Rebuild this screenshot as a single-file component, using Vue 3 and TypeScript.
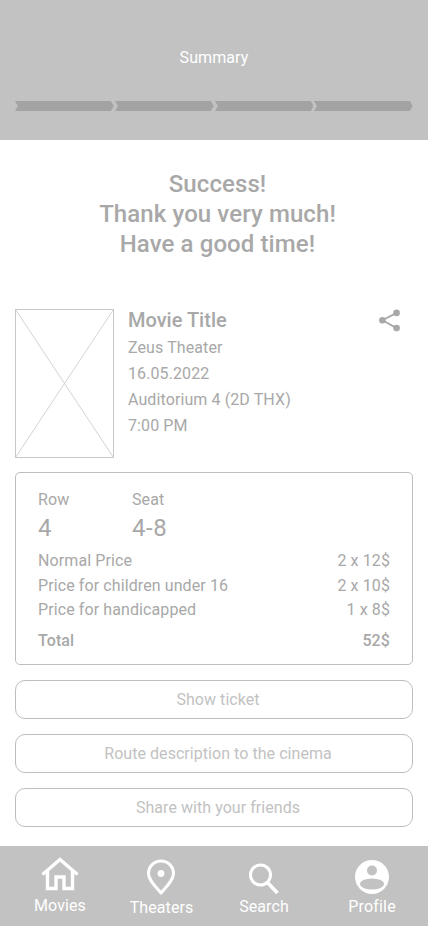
<script setup lang="ts">
const lines = ['Zeus Theater', '16.05.2022', 'Auditorium 4 (2D THX)', '7:00 PM']
const prices = [
  ['Normal Price', '2 x 12$'],
  ['Price for children under 16', '2 x 10$'],
  ['Price for handicapped', '1 x 8$'],
]
const actions = ['Show ticket', 'Route description to the cinema', 'Share with your friends']
</script>

<template>
  <div class="page">
    <header class="top">
      <div class="top-title">Summary</div>
      <div class="steps">
        <svg v-for="n in 4" :key="n" class="step" viewBox="0 0 100 10" preserveAspectRatio="none">
          <path d="M0 0H97L100 5L97 10H0L3 5Z" fill="#a3a3a3" />
        </svg>
      </div>
    </header>

    <section class="thanks">
      <div>Success!</div>
      <div>Thank you very much!</div>
      <div>Have a good time!</div>
    </section>

    <section class="movie">
      <svg class="poster" viewBox="0 0 99 149">
        <rect x="0.5" y="0.5" width="98" height="148" fill="none" stroke="#c8c8c8" />
        <path d="M0.5 0.5L98.5 148.5M98.5 0.5L0.5 148.5" stroke="#c8c8c8" stroke-width="0.8" fill="none" />
      </svg>
      <div class="info">
        <div class="title">Movie Title</div>
        <div v-for="l in lines" :key="l" class="info-line">{{ l }}</div>
      </div>
      <svg class="share" viewBox="1.5 1 21.5 22.5" fill="#a8a8a8">
        <circle cx="19.5" cy="4.5" r="3.4" />
        <circle cx="19.5" cy="20" r="3.4" />
        <circle cx="5" cy="12" r="3.4" />
        <path d="M5 12L19.5 4.5M5 12L19.5 20" stroke="#a8a8a8" stroke-width="2" />
      </svg>
    </section>

    <section class="card">
      <div class="seats">
        <div class="seat-col">
          <div class="seat-label">Row</div>
          <div class="seat-value">4</div>
        </div>
        <div class="seat-col">
          <div class="seat-label">Seat</div>
          <div class="seat-value">4-8</div>
        </div>
      </div>
      <div class="prices">
        <div v-for="p in prices" :key="p[0]" class="price-row">
          <span>{{ p[0] }}</span><span>{{ p[1] }}</span>
        </div>
      </div>
      <div class="total"><span class="total-label">Total</span><span>52$</span></div>
    </section>

    <section class="actions">
      <button v-for="a in actions" :key="a" class="action">{{ a }}</button>
    </section>

    <nav class="tabs">
      <div class="tab tab-movies">
        <svg class="icon" viewBox="0 0 38 34" fill="none" stroke="#fff" stroke-width="3.4">
          <path d="M1.5 17.5L19 2.5L36.5 17.5" stroke-linejoin="miter" />
          <path d="M6.5 14V31.5H15V20H23V31.5H31.5V14" />
        </svg>
        <span>Movies</span>
      </div>
      <div class="tab tab-theaters">
        <svg class="icon" viewBox="0 0 30 36">
          <path d="M15 34C9 27 2.5 21 2.5 14.5A12.5 12.5 0 0 1 27.5 14.5C27.5 21 21 27 15 34Z" fill="none" stroke="#fff" stroke-width="3" stroke-linejoin="round" />
          <circle cx="15" cy="14.5" r="3.4" fill="#fff" />
        </svg>
        <span>Theaters</span>
      </div>
      <div class="tab tab-search">
        <svg class="icon" viewBox="0 0 32 34" fill="none" stroke="#fff" stroke-width="3">
          <circle cx="12.5" cy="13" r="10" />
          <path d="M19.5 20.5L29.5 31" stroke-width="3.6" />
        </svg>
        <span>Search</span>
      </div>
      <div class="tab tab-profile">
        <svg class="icon" viewBox="0 0 36 36">
          <circle cx="18" cy="18" r="17" fill="#fff" />
          <circle cx="18" cy="11.5" r="5" fill="#c2c2c2" />
          <ellipse cx="18" cy="25" rx="12" ry="5.5" fill="#c2c2c2" />
        </svg>
        <span>Profile</span>
      </div>
    </nav>
  </div>
</template>

<style>
html, body { margin: 0; background: #fff; }
</style>

<style scoped>
.page {
  width: 428px;
  height: 926px;
  display: flex;
  flex-direction: column;
  font-family: Roboto, "Liberation Sans", sans-serif;
  color: #a8a8a8;
  overflow: hidden;
  letter-spacing: 0.1px;
}
.top {
  height: 140px;
  background: #c2c2c2;
  display: flex;
  flex-direction: column;
  box-sizing: border-box;
  padding: 48px 15px 0;
}
.top-title {
  color: #fff;
  font-size: 16px;
  line-height: 19px;
  text-align: center;
}
.steps {
  display: flex;
  gap: 1px;
  margin-top: 34px;
}
.step { flex: 1; height: 10px; display: block; }
.thanks {
  margin-top: 29px;
  padding-left: 7px;
  text-align: center;
  font-size: 24px;
  line-height: 30px;
  font-weight: 500;
  letter-spacing: 0.1px;
}
.movie {
  margin-top: 50px;
  padding: 0 15px;
  display: flex;
  align-items: flex-start;
}
.poster { width: 99px; height: 149px; flex: none; display: block; }
.info { margin-left: 14px; flex: 1; margin-top: -1px; }
.title { font-size: 20px; line-height: 24px; font-weight: 500; margin-bottom: 3px; letter-spacing: 0; }
.info-line { font-size: 16px; line-height: 26px; }
.share { width: 21px; height: 23px; margin: 0 13px 0 0; flex: none; }
.card {
  margin: 14px 15px 0;
  height: 193px;
  box-sizing: border-box;
  border: 1px solid #bdbdbd;
  border-radius: 5px;
  padding: 17px 22px 0;
}
.seats { display: flex; }
.seat-col { width: 94px; }
.seat-label { font-size: 16px; line-height: 19px; }
.seat-value { font-size: 24px; line-height: 28px; margin-top: 5px; letter-spacing: 0.6px; }
.prices { margin-top: 7px; }
.price-row, .total {
  display: flex;
  justify-content: space-between;
  font-size: 16px;
  line-height: 24.5px;
}
.total { margin-top: 6.5px; font-weight: 500; }
.actions {
  margin: 15px 15px 0;
  display: flex;
  flex-direction: column;
  gap: 15px;
}
.action {
  height: 39px;
  box-sizing: border-box;
  border: 1px solid #bdbdbd;
  border-radius: 10px;
  background: #fff;
  color: #c2c2c2;
  font: 400 16px Roboto, "Liberation Sans", sans-serif;
  letter-spacing: 0.05px;
  padding: 0 0 0 8px;
}
.tabs {
  margin-top: 19px;
  height: 80px;
  background: #c2c2c2;
  display: grid;
  box-sizing: border-box;
  padding-left: 10px;
  grid-template-columns: 101px 103px 108px 100px;
  color: #fff;
  font-size: 16px;
}
.tab {
  width: 100px;
  display: flex;
  flex-direction: column;
  align-items: center;
  line-height: 19px;
}
.icon { display: block; }
.tab-movies { padding-top: 11px; }
.tab-movies .icon { width: 38px; height: 34px; }
.tab-movies span { margin-top: 5px; }
.tab-theaters { padding-top: 13px; }
.tab-theaters .icon { width: 30px; height: 36px; }
.tab-theaters span { margin-top: 3px; margin-left: 1px; }
.tab-search { padding-top: 16px; }
.tab-search .icon { width: 32px; height: 34px; }
.tab-search span { margin-top: 1px; }
.tab-profile { padding-top: 13px; }
.tab-profile .icon { width: 36px; height: 36px; }
.tab-profile span { margin-top: 2px; letter-spacing: 0.2px; }
</style>
